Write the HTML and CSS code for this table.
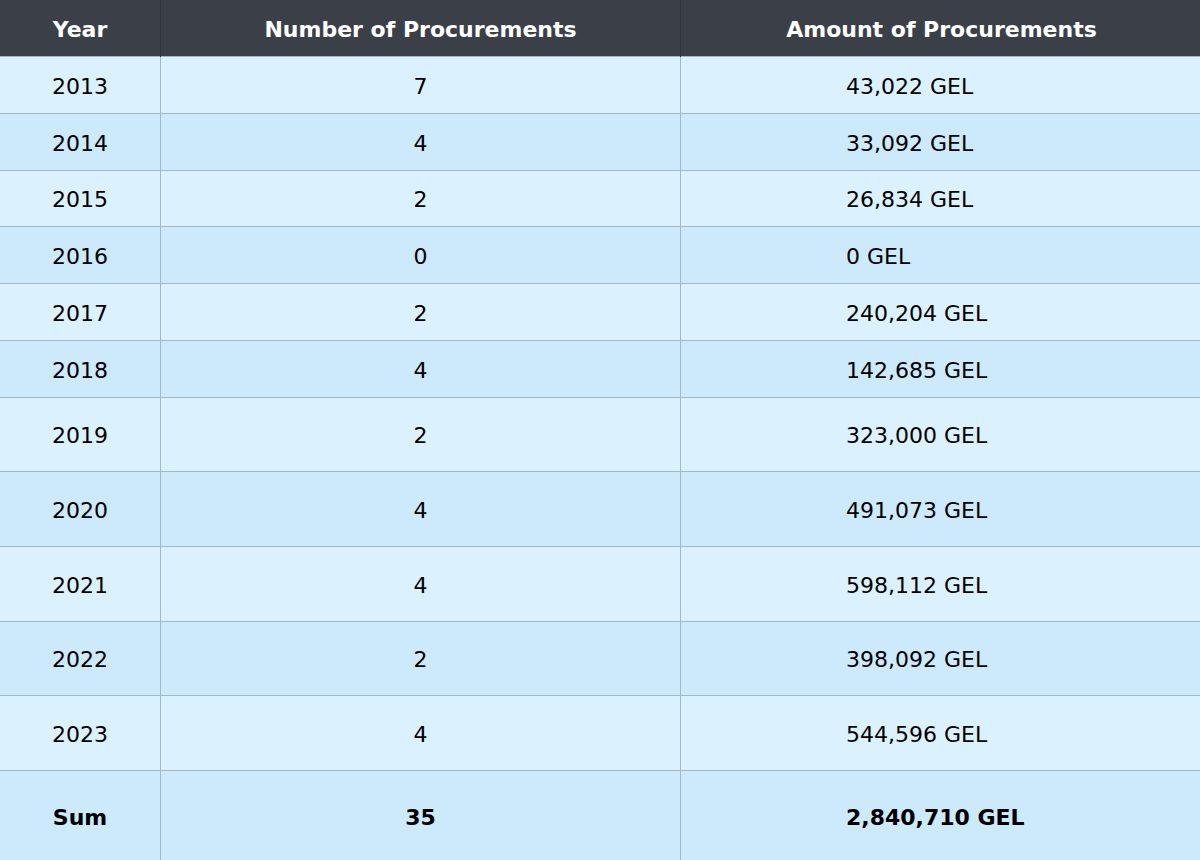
FILE: index.html
```html
<!DOCTYPE html>
<html>
<head>
<meta charset="utf-8">
<link rel="stylesheet" href="styles.css">
</head>
<body>
<table class="proc">
  <thead>
    <tr class="head">
      <th class="c-year">Year</th>
      <th class="c-num">Number of Procurements</th>
      <th class="c-amt">Amount of Procurements</th>
    </tr>
  </thead>
  <tbody>
    <tr class="r short odd"><td>2013</td><td>7</td><td class="amt">43,022 GEL</td></tr>
    <tr class="r short even"><td>2014</td><td>4</td><td class="amt">33,092 GEL</td></tr>
    <tr class="r short odd"><td>2015</td><td>2</td><td class="amt">26,834 GEL</td></tr>
    <tr class="r short even"><td>2016</td><td>0</td><td class="amt">0 GEL</td></tr>
    <tr class="r short odd"><td>2017</td><td>2</td><td class="amt">240,204 GEL</td></tr>
    <tr class="r short even"><td>2018</td><td>4</td><td class="amt">142,685 GEL</td></tr>
    <tr class="r tall odd"><td>2019</td><td>2</td><td class="amt">323,000 GEL</td></tr>
    <tr class="r tall even"><td>2020</td><td>4</td><td class="amt">491,073 GEL</td></tr>
    <tr class="r tall odd"><td>2021</td><td>4</td><td class="amt">598,112 GEL</td></tr>
    <tr class="r tall even"><td>2022</td><td>2</td><td class="amt">398,092 GEL</td></tr>
    <tr class="r tall odd"><td>2023</td><td>4</td><td class="amt">544,596 GEL</td></tr>
    <tr class="r sum even"><td>Sum</td><td>35</td><td class="amt">2,840,710 GEL</td></tr>
  </tbody>
</table>
</body>
</html>
```
FILE: styles.css
```css
html, body {
  margin: 0;
  padding: 0;
  background: #dbf1fd;
}
.proc {
  width: 1200px;
  border-collapse: collapse;
  table-layout: fixed;
  font-family: "DejaVu Sans", sans-serif;
  font-size: 22px;
  line-height: 1.2;
  color: #000;
}
.c-year { width: 160px; }
.c-num { width: 519px; }
.c-amt { width: 521px; }
.head th {
  height: 52px;
  padding: 4px 0 0;
  background: #3b4048;
  color: #fff;
  font-weight: bold;
  text-align: center;
  border-left: 1px solid #30343a;
}
.head th:first-child { border-left: none; }
.r td {
  padding: 4px 0 0;
  text-align: center;
  vertical-align: middle;
  border: 1px solid #a0b8cb;
}
.r td:first-child { border-left: none; }
.r td:last-child { border-right: none; }
.r td.amt {
  text-align: left;
  padding-left: 165px;
}
.short td { height: 51.8px; }
.tall td { height: 69.6px; }
.sum td { height: 83px; padding-top: 6px; font-weight: bold; border-bottom: none; }
.odd td { background: #dbf1fd; }
.even td { background: #cde9fc; }
```
